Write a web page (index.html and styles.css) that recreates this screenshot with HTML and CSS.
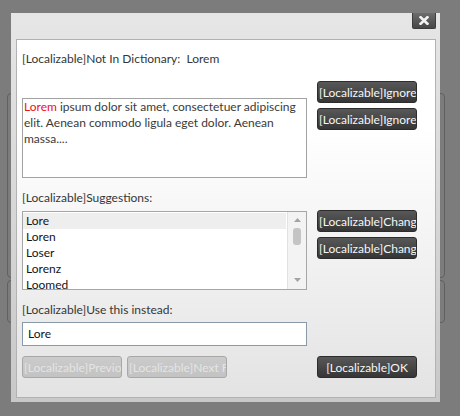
FILE: index.html
```html
<!DOCTYPE html>
<html>
<head>
<meta charset="utf-8">
<link rel="stylesheet" href="styles.css">
</head>
<body>
<div class="page">
  <div class="bg-card bg-card-main"></div>
  <div class="bg-card bg-card-small"></div>
</div>
<div class="dialog">
  <div class="titlebar">
    <button class="close-btn"><svg width="10" height="9" viewBox="0 0 10 9"><path d="M1.6 1.2 L8.4 7.8 M8.4 1.2 L1.6 7.8" stroke="#f2f2f2" stroke-width="2.6" stroke-linecap="square"/></svg></button>
  </div>
  <div class="panel">
    <div class="label">[Localizable]Not In Dictionary:&nbsp; Lorem</div>
    <div class="row row-text">
      <div class="textbox"><span class="err">Lorem</span> ipsum dolor sit amet, consectetuer adipiscing<br>elit. Aenean commodo ligula eget dolor. Aenean<br>massa....</div>
      <div class="btn-col">
        <button class="btn dark">[Localizable]Ignore</button>
        <button class="btn dark">[Localizable]Ignore</button>
      </div>
    </div>
    <div class="label label-gap">[Localizable]Suggestions:</div>
    <div class="row row-list">
      <div class="listbox">
        <div class="items">
          <div class="item sel">Lore</div>
          <div class="item">Loren</div>
          <div class="item">Loser</div>
          <div class="item">Lorenz</div>
          <div class="item">Loomed</div>
        </div>
        <div class="scrollbar">
          <svg class="arrow-up" width="7" height="4" viewBox="0 0 7 4"><path d="M0 4 L3.5 0 L7 4Z" fill="#a4a4a4"/></svg>
          <div class="thumb"></div>
          <div class="spacer"></div>
          <svg class="arrow-down" width="7" height="4" viewBox="0 0 7 4"><path d="M0 0 L3.5 4 L7 0Z" fill="#a4a4a4"/></svg>
        </div>
      </div>
      <div class="btn-col">
        <button class="btn dark">[Localizable]Change</button>
        <button class="btn dark">[Localizable]Change All</button>
      </div>
    </div>
    <div class="label label-gap">[Localizable]Use this instead:</div>
    <div class="input">Lore</div>
    <div class="row row-bottom">
      <div class="nav">
        <button class="btn disabled">[Localizable]Previous</button>
        <button class="btn disabled">[Localizable]Next Fix</button>
      </div>
      <button class="btn dark center">[Localizable]OK</button>
    </div>
  </div>
</div>
</body>
</html>
```
FILE: styles.css
```css
html, body {
  margin: 0;
  padding: 0;
}
body {
  width: 460px;
  height: 416px;
  overflow: hidden;
  background: #7c7c7c;
  font-family: Lato, "Open Sans", sans-serif;
  font-size: 12px;
}
.page {
  padding: 93px 0 0 7px;
}
.bg-card {
  width: 438px;
  box-sizing: border-box;
  border: 1px solid #606060;
  border-radius: 4px;
}
.bg-card-main {
  height: 185px;
}
.bg-card-small {
  height: 43px;
  margin-top: 2px;
}
.dialog {
  position: absolute;
  left: 11px;
  top: 13px;
  width: 429px;
  height: 389px;
  box-sizing: border-box;
  background: linear-gradient(#e6e6e6, #c8c8c8);
  display: flex;
  flex-direction: column;
  padding: 0 4px 4px 5px;
}
.titlebar {
  height: 26px;
  flex: none;
  display: flex;
  justify-content: flex-end;
  align-items: flex-start;
}
.close-btn {
  width: 24px;
  height: 16px;
  box-sizing: border-box;
  margin: 0;
  padding: 0;
  border: 1px solid #3c3c3c;
  border-top: none;
  border-radius: 0 0 2px 2px;
  background: linear-gradient(#6c6c6c, #474747);
  display: flex;
  align-items: center;
  justify-content: center;
}
.close-btn svg {
  display: block;
}
.panel {
  flex: 1;
  border: 1px solid #b2b2b2;
  background: linear-gradient(#ffffff 0%, #ffffff 25%, #e3e3e3 100%);
  padding: 11px 0 0 5px;
  display: flex;
  flex-direction: column;
}
.label {
  height: 16px;
  line-height: 16px;
  color: #363636;
  white-space: nowrap;
}
.label-gap {
  margin-top: 12px;
}
.row {
  display: flex;
  gap: 10px;
  align-items: flex-start;
}
.row-text {
  margin-top: 14px;
}
.textbox {
  width: 285px;
  height: 80px;
  flex: none;
  box-sizing: border-box;
  border: 1px solid #a2a2a2;
  background: #ffffff;
  margin-top: 17px;
  padding: 0 1px;
  line-height: 16px;
  color: #3a3a3a;
  white-space: nowrap;
  overflow: hidden;
}
.err {
  color: #ee1111;
}
.btn-col {
  display: flex;
  flex-direction: column;
  gap: 5px;
}
.btn {
  width: 100px;
  height: 22px;
  flex: none;
  box-sizing: border-box;
  margin: 0;
  border-radius: 3px;
  font-family: Lato, "Open Sans", sans-serif;
  font-size: 12px;
  padding: 0 0 0 1px;
  text-align: left;
  white-space: nowrap;
  overflow: hidden;
}
.dark {
  background: linear-gradient(#585858, #363636);
  border: 1px solid #2c2c2c;
  color: #f6f6f6;
}
.disabled {
  background: linear-gradient(#cbcbcb, #c3c3c3);
  border: 1px solid #a8a8a8;
  color: #e4e4e4;
}
.center {
  text-align: center;
  padding: 0;
}
.row-list {
  margin-top: 4px;
}
.listbox {
  width: 285px;
  height: 79px;
  flex: none;
  box-sizing: border-box;
  margin-top: 1px;
  border: 1px solid #a6a6a6;
  background: #ffffff;
  display: flex;
  overflow: hidden;
}
.items {
  flex: 1;
  padding-top: 1px;
  margin-right: 1px;
}
.item {
  height: 16px;
  line-height: 16px;
  padding-left: 3px;
  color: #141414;
}
.item.sel {
  background: #eeeeee;
}
.scrollbar {
  width: 19px;
  flex: none;
  background: #f3f3f3;
  border-left: 1px solid #e2e2e2;
  display: flex;
  flex-direction: column;
  align-items: center;
  padding: 6px 0 7px;
  box-sizing: border-box;
}
.scrollbar svg {
  display: block;
}
.thumb {
  width: 8px;
  height: 17px;
  margin-top: 6px;
  border-radius: 3px;
  background: #c4c4c4;
}
.spacer {
  flex: 1;
}
.input {
  width: 285px;
  height: 24px;
  box-sizing: border-box;
  margin-top: 4px;
  border: 1px solid #8a99a8;
  padding-left: 5px;
  line-height: 22px;
  color: #141414;
  background: #ffffff;
}
.row-bottom {
  margin-top: 10px;
}
.nav {
  width: 285px;
  display: flex;
  gap: 5px;
}
```
